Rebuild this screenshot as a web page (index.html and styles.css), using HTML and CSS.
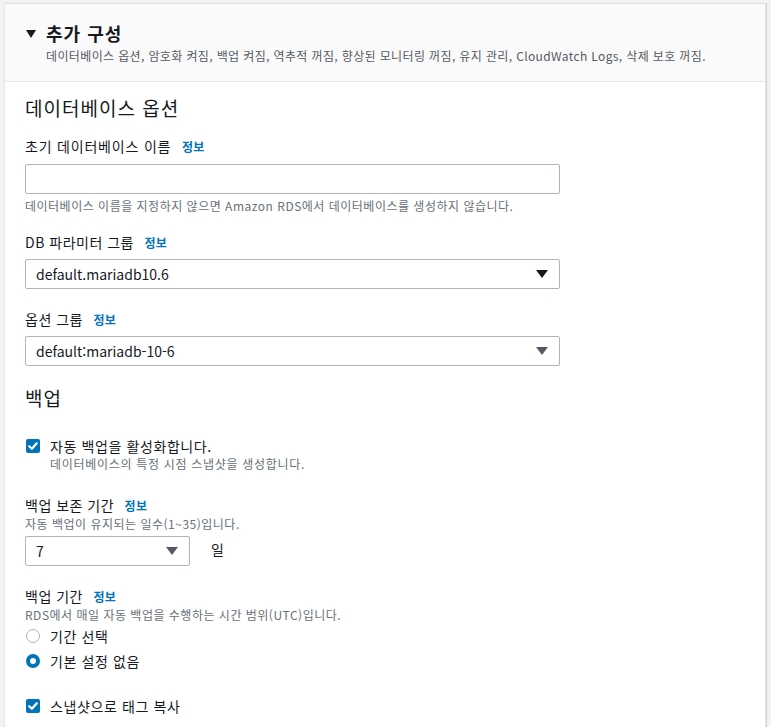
FILE: index.html
```html
<!DOCTYPE html>
<html lang="ko">
<head>
<meta charset="utf-8">
<link rel="stylesheet" href="styles.css">
</head>
<body>
<div class="panel">
  <div class="panel-header">
    <div class="title-row">
      <span class="caret"></span>
      <h2 class="title">추가 구성</h2>
    </div>
    <div class="summary">데이터베이스 옵션, 암호화 켜짐, 백업 켜짐, 역추적 꺼짐, 향상된 모니터링 꺼짐, 유지 관리, CloudWatch Logs, 삭제 보호 꺼짐.</div>
  </div>
  <div class="panel-body">
    <h3 class="section-title">데이터베이스 옵션</h3>

    <div class="field f-dbname">
      <div class="label">초기 데이터베이스 이름 <a class="info">정보</a></div>
      <div class="input"></div>
      <div class="hint">데이터베이스 이름을 지정하지 않으면 Amazon RDS에서 데이터베이스를 생성하지 않습니다.</div>
    </div>

    <div class="field f-param">
      <div class="label">DB 파라미터 그룹 <a class="info">정보</a></div>
      <div class="select"><span>default.mariadb10.6</span><span class="arrow dark"></span></div>
    </div>

    <div class="field f-opt">
      <div class="label">옵션 그룹 <a class="info">정보</a></div>
      <div class="select"><span>default:mariadb-10-6</span><span class="arrow grey"></span></div>
    </div>

    <h3 class="section-title backup">백업</h3>

    <div class="check-row f-auto">
      <span class="checkbox"><svg viewBox="0 0 14 14" width="14" height="14"><path d="M3.2 7.2 L5.9 9.8 L10.8 4.3" fill="none" stroke="#fff" stroke-width="2.2" stroke-linecap="round" stroke-linejoin="round"/></svg></span>
      <div>
        <div class="check-label">자동 백업을 활성화합니다.</div>
        <div class="check-desc">데이터베이스의 특정 시점 스냅샷을 생성합니다.</div>
      </div>
    </div>

    <div class="field f-ret">
      <div class="label">백업 보존 기간 <a class="info">정보</a></div>
      <div class="desc">자동 백업이 유지되는 일수(1~35)입니다.</div>
      <div class="inline">
        <div class="select short"><span>7</span><span class="arrow grey"></span></div>
        <span class="unit">일</span>
      </div>
    </div>

    <div class="field f-window">
      <div class="label">백업 기간 <a class="info">정보</a></div>
      <div class="desc">RDS에서 매일 자동 백업을 수행하는 시간 범위(UTC)입니다.</div>
      <div class="radio-row"><span class="radio"></span><span>기간 선택</span></div>
      <div class="radio-row"><span class="radio on"></span><span>기본 설정 없음</span></div>
    </div>

    <div class="check-row f-tags">
      <span class="checkbox"><svg viewBox="0 0 14 14" width="14" height="14"><path d="M3.2 7.2 L5.9 9.8 L10.8 4.3" fill="none" stroke="#fff" stroke-width="2.2" stroke-linecap="round" stroke-linejoin="round"/></svg></span>
      <div><div class="check-label">스냅샷으로 태그 복사</div></div>
    </div>
  </div>
</div>
</body>
</html>
```

FILE: styles.css
```css
html, body {
  margin: 0;
  padding: 0;
}
body {
  background: #f2f3f3;
  font-family: "Noto Sans CJK KR", "Noto Sans", sans-serif;
  color: #16191f;
  overflow: hidden;
  height: 727px;
}
.panel {
  margin: 3px 5px 0 4px;
  background: #fff;
  border: 1px solid #e4e6e6;
  box-shadow: 1px 0 1px rgba(0,0,0,0.12);
  height: 760px;
}
.panel-header {
  background: #fafafa;
  border-bottom: 1px solid #e6e8e8;
  padding: 16px 20px 0 20px;
  height: 61px;
}
.title-row {
  display: flex;
  align-items: center;
  height: 26px;
}
.caret {
  width: 0;
  height: 0;
  border-left: 5px solid transparent;
  border-right: 5px solid transparent;
  border-top: 8px solid #16191f;
  margin-left: 1px;
  margin-right: 10px;
  margin-top: 2px;
}
.title {
  margin: 0;
  font-size: 18px;
  font-weight: 700;
  line-height: 26px;
  letter-spacing: 1px;
}
.summary {
  margin-left: 21px;
  margin-top: 1px;
  font-size: 12px;
  line-height: 18px;
  color: #545b64;
  letter-spacing: 0.37px;
}
.panel-body {
  padding: 13px 20px 0 20px;
}
.section-title {
  margin: 0;
  font-size: 19px;
  font-weight: 400;
  line-height: 26px;
  letter-spacing: 1px;
}
.section-title.backup {
  margin-top: 19px;
}
.field {
  margin-top: 18px;
}
.f-dbname { margin-top: 14px; }
.f-param { margin-top: 17px; }
.f-opt { margin-top: 19px; }
.label {
  font-size: 14px;
  line-height: 22px;
  letter-spacing: 0.5px;
}
.f-dbname .label { letter-spacing: 0.8px; }
.info {
  color: #0073bb;
  font-size: 12px;
  font-weight: 700;
  margin-left: 6px;
  letter-spacing: 0.3px;
}
.input, .select {
  width: 535px;
  height: 30px;
  box-sizing: border-box;
  border: 1px solid #aab7b8;
  border-radius: 2px;
  margin-top: 5px;
  background: #fff;
}
.input { margin-top: 6px; }
.select {
  display: flex;
  align-items: center;
  justify-content: space-between;
  padding: 0 11px 0 10px;
  font-size: 14px;
}
.select.short {
  width: 165px;
  margin-top: 4px;
}
.arrow {
  width: 0;
  height: 0;
  border-left: 6px solid transparent;
  border-right: 6px solid transparent;
  border-top: 8px solid #16191f;
}
.arrow.grey { border-top-color: #545b64; }
.hint, .desc {
  font-size: 12px;
  line-height: 16px;
  color: #687078;
  letter-spacing: 0.5px;
}
.hint { margin-top: 4px; }
.check-row {
  display: flex;
  align-items: flex-start;
}
.f-auto { margin-top: 25px; }
.checkbox {
  width: 14px;
  height: 14px;
  background: #0073bb;
  border-radius: 2px;
  margin: 3px 10px 0 1px;
  flex: none;
  display: flex;
}
.check-label {
  font-size: 14px;
  line-height: 20px;
  letter-spacing: 0.6px;
}
.check-desc {
  font-size: 12px;
  line-height: 16px;
  color: #687078;
  letter-spacing: 0.7px;
}
.f-ret { margin-top: 22px; }
.f-ret .desc { margin-top: -1px; }
.inline {
  display: flex;
  align-items: center;
}
.unit {
  margin-left: 21px;
  font-size: 14px;
}
.f-window { margin-top: 19px; }
.f-window .desc { margin-top: -1px; }
.radio-row {
  display: flex;
  align-items: center;
  font-size: 14px;
  line-height: 20px;
  margin-top: 5px;
  letter-spacing: 0.6px;
}
.f-window .desc + .radio-row { margin-top: 3px; }
.radio {
  width: 14px;
  height: 14px;
  box-sizing: border-box;
  border: 1.5px solid #aab7b8;
  border-radius: 50%;
  margin-right: 10px;
  margin-left: 1px;
  flex: none;
}
.radio.on {
  border: 4px solid #0073bb;
}
.f-tags { margin-top: 25px; }
```
